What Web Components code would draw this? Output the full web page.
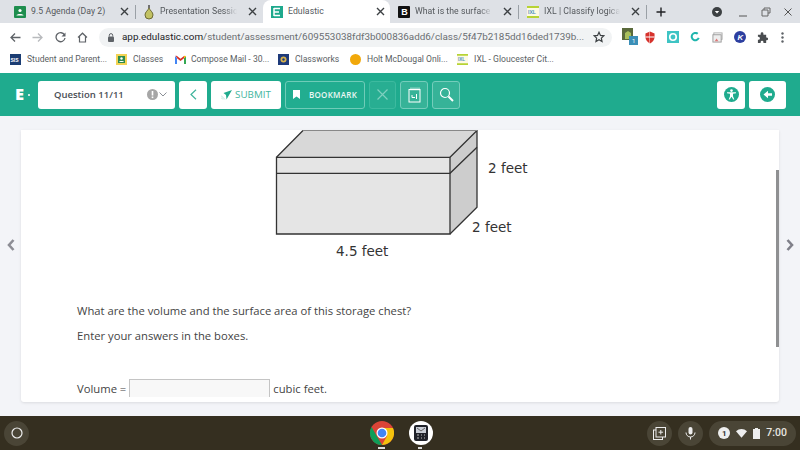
<!DOCTYPE html>
<html><head><meta charset="utf-8"><style>
html,body{margin:0;padding:0;width:800px;height:450px;overflow:hidden;background:#f3f4f8}
body{display:flex;flex-direction:column;font-family:"Open Sans","Noto Sans",sans-serif}
</style></head><body>
<browser-chrome></browser-chrome>
<edu-toolbar></edu-toolbar>
<test-stage></test-stage>
<os-shelf></os-shelf>
<script>
function def(name,html){customElements.define(name,class extends HTMLElement{constructor(){super();this.attachShadow({mode:'open'}).innerHTML=html(this)}})}
const x='<svg width="9" height="9" viewBox="0 0 9 9"><path d="M1 1l7 7M8 1L1 8" stroke="#3c4043" stroke-width="1.4"/></svg>';
const ixl='<rect width="12" height="12" fill="#fdf9e4"/><path d="M0 1h12M0 11h12" stroke="#b7d334" stroke-width="2"/><text x="1" y="8" font-size="5" font-weight="700" fill="#4a90c0" font-family="Liberation Sans">IXL</text>';
def('chrome-tab',h=>`<style>:host{display:flex;align-items:center;box-sizing:border-box;height:23px;flex:none;gap:5px;font:8.7px/1 "Roboto",sans-serif;letter-spacing:.05px;color:#54585c;white-space:nowrap}
.ic{display:flex;align-items:center;justify-content:center;flex:none}
.t{flex:1;min-width:0}
:host([fade]) .t{-webkit-mask-image:linear-gradient(90deg,#000 calc(100% - 18px),transparent calc(100% - 6px));mask-image:linear-gradient(90deg,#000 calc(100% - 18px),transparent calc(100% - 6px))}
:host([active]){background:#fff;border-radius:8px 8px 0 0}
.x{display:flex;flex:none}</style><span class="ic"><slot></slot></span><span class="t">${h.getAttribute('t')}</span><span class="x">${x}</span>`);
def('browser-chrome',()=>`<style>:host{display:block;flex:none}
.tabs{display:flex;height:23px;background:#dee1e6;align-items:center}
.sep{width:1px;height:14px;background:#9aa0a6;flex:none}
.omni{display:flex;align-items:center;height:26px;background:#fff;padding:2px 0 0 10px;box-sizing:border-box}
.omni>svg{flex:none}
.pill{display:flex;align-items:center;flex:none;height:19px;background:#f1f3f4;border-radius:10px;width:513px;box-sizing:border-box;padding:0 7px 0 9px;font:9.9px/1 "Roboto",sans-serif;color:#6a6e72;margin-left:11px}
.pill svg{flex:none}
.u{flex:1;min-width:0;white-space:nowrap;margin-left:8px}.u b{font-weight:400;color:#202124}
.bm{display:flex;align-items:center;height:24px;background:#fff;font:8.6px/1 "Roboto",sans-serif;color:#5a5e62;padding:0 0 3px 10px;box-sizing:border-box}
.bm span{display:flex;align-items:center;gap:6px;white-space:nowrap;flex:none}
.bm svg{flex:none}
</style>
<div class="tabs">
<chrome-tab t="9.5 Agenda (Day 2)" style="width:135px;padding:0 6px 0 14px"><svg width="12" height="12" viewBox="0 0 12 12"><rect width="12" height="12" fill="#1e8e4e" rx="1"/><circle cx="6" cy="4.5" r="1.6" fill="#fff"/><path d="M2.500 9.500c0-2 7-2 7 0z" fill="#fff"/></svg></chrome-tab>
<div class="sep"></div>
<chrome-tab fade t="Presentation Session" style="width:127px;padding:0 6px 0 7px"><svg width="12" height="16" viewBox="0 0 12 16"><path d="M6 4C5 6.500 2 8 2 11a4 4 0 0 0 8 0C10 8 7 6.500 6 4z" fill="#c2c263" stroke="#6d6a33"/><path d="M5.200 1h1.600v3H5.200z" fill="#555"/></svg></chrome-tab>
<chrome-tab active t="Edulastic" style="width:127px;padding:0 5px 0 8px"><svg width="12" height="12" viewBox="0 0 12 12"><rect width="12" height="12" fill="#1fa98d"/><path d="M3 2v8M3 2.500h6M3 6h5M3 9.500h6" stroke="#fff" stroke-width="1.500" fill="none"/></svg></chrome-tab>
<chrome-tab fade t="What is the surface ar" style="width:128px;padding:0 6px 0 8px"><svg width="12" height="12" viewBox="0 0 12 12"><rect width="12" height="12" fill="#111" rx="1"/><text x="3.200" y="9.400" font-size="9" font-weight="700" fill="#fff" font-family="Liberation Sans">B</text></svg></chrome-tab>
<div class="sep"></div>
<chrome-tab fade t="IXL | Classify logical f" style="width:127px;padding:0 6px 0 8px"><svg width="12" height="12" viewBox="0 0 12 12">${ixl}</svg></chrome-tab>
<div class="sep"></div>
<svg style="margin-left:9px;flex:none" width="10" height="10" viewBox="0 0 10 10"><path d="M5 .5v9M.5 5h9" stroke="#202124" stroke-width="1.400"/></svg>
<svg style="margin-left:auto;flex:none" width="10" height="10" viewBox="0 0 10 10"><circle cx="5" cy="5" r="5" fill="#3c4043"/><path d="M2.800 4h4.400L5 6.600z" fill="#fff"/></svg>
<svg style="margin-left:17px;flex:none" width="8" height="10" viewBox="0 0 8 10"><path d="M0 9h8" stroke="#555" stroke-width="1"/></svg>
<svg style="margin-left:14px;flex:none" width="10" height="10" viewBox="0 0 10 10"><path d="M3 3V1h6v5H7M1 3h6v6H1z" stroke="#666" fill="none"/></svg>
<svg style="margin:0 8px 0 13px;flex:none" width="8" height="8" viewBox="0 0 8 8"><path d="M.5.500l7 7M7.500.500l-7 7" stroke="#555" stroke-width="1"/></svg>
</div>
<div class="omni">
<svg width="11" height="11" viewBox="0 0 11 11"><path d="M10.500 5.500H1M5 1.500l-4 4 4 4" stroke="#5f6368" stroke-width="1.300" fill="none"/></svg>
<svg style="margin-left:11px" width="11" height="11" viewBox="0 0 11 11"><path d="M.5 5.500H10M6 1.500l4 4-4 4" stroke="#b8babd" stroke-width="1.300" fill="none"/></svg>
<svg style="margin-left:12px" width="11" height="11" viewBox="0 0 11 11"><path d="M9.500 3A4.500 4.500 0 1 0 10 6" stroke="#5f6368" stroke-width="1.300" fill="none"/><path d="M10.500 .5v4h-4z" fill="#5f6368"/></svg>
<svg style="margin-left:11px" width="11" height="11" viewBox="0 0 11 11"><path d="M1 5.500 5.500 1.200 10 5.500M2.500 4.500v5.500h6V4.500" stroke="#5f6368" stroke-width="1.200" fill="none"/></svg>
<div class="pill"><svg width="6" height="9" viewBox="0 0 6 9"><rect y="3.500" width="6" height="5.500" rx="1" fill="#5f6368"/><path d="M1.300 3.500V2.300a1.700 1.700 0 0 1 3.400 0V3.500" stroke="#5f6368" fill="none"/></svg><span class="u"><b>app.edulastic.com</b>/student/assessment/609553038fdf3b000836add6/class/5f47b2185dd16ded1739b...</span><svg width="12" height="12" viewBox="0 0 24 24"><path d="M12 2.500l2.900 6.300 6.900.8-5.100 4.700 1.400 6.800-6.100-3.500-6.100 3.500 1.400-6.800-5.100-4.700 6.900-.8z" fill="none" stroke="#3c4043" stroke-width="2.400"/></svg></div>
<svg style="margin-left:10px" width="16" height="18" viewBox="0 0 16 18"><rect x="0" y="0" width="11" height="12" fill="#5a6a3c"/><path d="M3 11V5l3-2 3 2v6z" fill="#a9c05c"/><rect x="7" y="8" width="9" height="9" fill="#3b8fb8"/><text x="10" y="15" font-size="6" fill="#fff" font-family="Roboto">1</text></svg>
<svg style="margin-left:7px" width="10" height="13" viewBox="0 0 11 13"><path d="M5.500 0l5 2v4c0 3-2 5.500-5 7-3-1.500-5-4-5-7V2z" fill="#d6322c"/><path d="M5.500 0v5.500h5v1h-5V13H5V6.500H.5v-1H5V0z" fill="#fff"/></svg>
<svg style="margin-left:12px" width="12" height="12" viewBox="0 0 13 13"><rect width="13" height="13" fill="#3fc4c4"/><circle cx="6.500" cy="6.500" r="3.500" fill="none" stroke="#fff" stroke-width="1.800"/></svg>
<svg style="margin-left:11px" width="10" height="10" viewBox="0 0 11 11"><path d="M8.500 2A4 4 0 1 0 9.600 6.500" fill="none" stroke="#1fb5ad" stroke-width="2.200"/></svg>
<svg style="margin-left:12px" width="11" height="11" viewBox="0 0 12 12"><rect x="2" y="1" width="9" height="7" fill="#fff" stroke="#aaa"/><rect x="1" y="3" width="9" height="8" fill="#eee" stroke="#999"/><path d="M3 10l2-3 2 3z" fill="#d77"/></svg>
<svg style="margin-left:11px" width="12" height="12" viewBox="0 0 13 13"><circle cx="6.500" cy="6.500" r="6.500" fill="#2d3fa0"/><text x="3.800" y="9.500" font-size="8.500" font-style="italic" font-weight="700" fill="#fff" font-family="Liberation Sans">K</text></svg>
<svg style="margin-left:11px" width="11" height="11" viewBox="0 0 12 12"><path d="M1 3h3V1.800a1.500 1.500 0 0 1 3 0V3h3v3h.6a1.500 1.500 0 0 1 0 3H10v3H7v-1a1.500 1.500 0 0 0-3 0v1H1V8.500h.5a1.700 1.700 0 0 0 0-3.400H1z" fill="#4a4d50"/></svg>
<svg style="margin-left:13px" width="3" height="11" viewBox="0 0 3 11"><circle cx="1.500" cy="1.500" r="1.200" fill="#5f6368"/><circle cx="1.500" cy="5.500" r="1.200" fill="#5f6368"/><circle cx="1.500" cy="9.500" r="1.200" fill="#5f6368"/></svg>
</div>
<div class="bm">
<span style="width:106px"><svg width="11" height="11" viewBox="0 0 11 11"><rect width="11" height="11" fill="#1b3d73"/><text x=".5" y="7.500" font-size="5" font-weight="700" fill="#fff" font-family="Liberation Sans">SIS</text></svg>Student and Parent...</span>
<span style="width:59px"><svg width="11" height="11" viewBox="0 0 11 11"><rect width="11" height="11" fill="#f2d354"/><rect x="2" y="2" width="7" height="7" fill="#2e8b4e"/><circle cx="5.500" cy="4.500" r="1.200" fill="#fff"/><path d="M3 8c0-1.500 5-1.500 5 0z" fill="#fff"/></svg>Classes</span>
<span style="width:103px;gap:5px"><svg width="11" height="9" viewBox="0 0 11 9"><path d="M0 1V9h11V1L9 .5 5.500 3.200 2 .5z" fill="#fff"/><path d="M2 3.200 5.500 6 9 3.200V1L5.500 3.700 2 1 .5 .6z" fill="#d93025"/><path d="M0 1V9h2V3z" fill="#4285f4"/><path d="M9 3v6h2V1.500z" fill="#34a853"/><path d="M9 .8v2.400l2-1.600V1z" fill="#fbbc04"/></svg>Compose Mail - 30...</span>
<span style="width:72px"><svg width="11" height="11" viewBox="0 0 11 11"><rect width="11" height="11" fill="#1e3a7a"/><circle cx="5.500" cy="5.500" r="3" fill="#d8b24c"/><circle cx="5.500" cy="5.500" r="1.200" fill="#1e3a7a"/></svg>Classworks</span>
<span style="width:107px"><svg width="11" height="11" viewBox="0 0 11 11"><circle cx="5.500" cy="5.500" r="5.500" fill="#f1a80a"/></svg>Holt McDougal Onli...</span>
<span><svg width="11" height="11" viewBox="0 0 12 12">${ixl}</svg>IXL - Gloucester Cit...</span>
</div>`);
def('edu-btn',h=>`<style>:host{display:flex;align-items:center;justify-content:center;box-sizing:border-box;height:28px;border-radius:3px;flex:none;background:#fff;color:#44b6a0;gap:3px;font:400 9.800px/1 "Open Sans",sans-serif;margin-left:4px}
:host([ghost]){background:#36b398;border:1px solid #74cdbb;color:#eaf7f4}
:host([line]){background:#22ad90;border:1px solid #6fccb8;color:#eaf7f4}
:host([dim]){background:#28ae92;border:1px solid #3dba9f}</style><slot></slot>`);
def('edu-toolbar',()=>`<style>:host{display:flex;align-items:center;flex:none;height:43px;background:#1fab8e;box-sizing:border-box;padding:0 14px 0 15px}
.logo{color:#fff;font:800 16.500px/1 "Open Sans",sans-serif;width:23px;flex:none;display:flex;align-items:center;gap:4px}
.logo i{width:2px;height:2px;border-radius:50%;background:#fff}
.q{font:600 9.500px/1 "Open Sans",sans-serif;color:#4a4e55;margin-left:16px;flex:1;white-space:nowrap}
</style><span class="logo">E<i></i></span>
<edu-btn style="width:137px;margin-left:0;justify-content:flex-start;gap:0;padding-right:8px"><span class="q">Question 11/11</span><svg width="11" height="11" viewBox="0 0 11 11"><circle cx="5.500" cy="5.500" r="5.500" fill="#a6a6a6"/><rect x="4.700" y="2" width="1.600" height="4.500" fill="#fff"/><rect x="4.700" y="7.500" width="1.600" height="1.600" fill="#fff"/></svg><svg style="margin-left:1px" width="8" height="5" viewBox="0 0 8 5"><path d="M.5.500l3.500 3.500 3.500-3.500" fill="none" stroke="#8a8f96"/></svg></edu-btn>
<edu-btn style="width:28px"><svg width="7" height="11" viewBox="0 0 7 11"><path d="M6 .7 1 5.500l5 4.800" fill="none" stroke="#3fb49c" stroke-width="1.200"/></svg></edu-btn>
<edu-btn style="width:70px"><svg width="11" height="10" viewBox="0 0 11 10"><path d="M11 0 2.500 3 5 5l.500 4.500z" fill="#1fab8e"/><path d="M0 7.500l2 2M0 5.500l4 4" stroke="#a5dcd0" stroke-width=".8"/></svg>SUBMIT</edu-btn>
<edu-btn line style="width:80px;font-size:8px;font-weight:600;gap:9px;letter-spacing:.3px"><svg width="7" height="9" viewBox="0 0 7 9"><path d="M0 0h7v9L3.500 6.500 0 9z" fill="#fff"/></svg>BOOKMARK</edu-btn>
<edu-btn dim style="width:27px"><svg width="11" height="11" viewBox="0 0 11 11"><path d="M.5.500l10 10M10.500.500l-10 10" stroke="#7fd0bf" stroke-width="1.200"/></svg></edu-btn>
<edu-btn ghost style="width:28px"><svg width="13" height="16" viewBox="0 0 13 16"><rect x="1" y="2.500" width="11" height="12.500" fill="none" stroke="#fff" stroke-width="1"/><path d="M3 .5v3M5 .5v3M7 .5v3M9 .5v3M11 .5v3" stroke="#fff" stroke-width=".8"/><path d="M4 8v2.500h3M8.500 7v5" stroke="#fff" fill="none"/></svg></edu-btn>
<edu-btn ghost style="width:28px"><svg width="15" height="15" viewBox="0 0 15 15"><circle cx="6" cy="6" r="4.500" fill="none" stroke="#fff" stroke-width="1.200"/><path d="M9.500 9.500l4.500 4.500" stroke="#fff" stroke-width="2"/></svg></edu-btn>
<edu-btn style="width:28px;margin-left:auto"><svg width="15" height="15" viewBox="0 0 15 15"><circle cx="7.500" cy="7.500" r="7.500" fill="#1fab8e"/><circle cx="7.500" cy="3.600" r="1.300" fill="#fff"/><path d="M3 5.300h9v1l-3 .5v2.500L10.300 12.500h-1L7.500 9.800 5.700 12.500h-1L6 9.300V6.800L3 6.300z" fill="#fff"/></svg></edu-btn>
<edu-btn style="width:37px"><svg width="15" height="15" viewBox="0 0 15 15"><circle cx="7.500" cy="7.500" r="7.500" fill="#1fab8e"/><path d="M12 6.300H8V3.800L3.500 7.500 8 11.200V8.700h4z" fill="#fff"/></svg></edu-btn>`);
def('test-stage',()=>`<style>:host{display:flex;flex:1;min-height:0;position:relative;background:#f3f4f8;padding:14px 21px 0 21px;overflow:hidden;box-sizing:border-box;align-items:flex-start}
.edge{position:absolute;top:123px;width:8px;height:12px}
.bar{position:absolute;left:776px;top:54px;width:3px;height:177px;background:#8f9092}
</style><question-card style="flex:1"></question-card>
<svg class="edge" style="left:7px" viewBox="0 0 8 12"><path d="M6.500 1 2 6l4.500 5" fill="none" stroke="#8d8d95" stroke-width="2.600"/></svg>
<svg class="edge" style="left:786px" viewBox="0 0 8 12"><path d="M1.500 1 6 6l-4.500 5" fill="none" stroke="#80808a" stroke-width="2.600"/></svg>
<div class="bar"></div>`);
def('question-card',()=>`<style>:host{display:block;background:#fff;height:272px;border-radius:0 0 3px 3px;box-shadow:0 1px 3px #0000001a;font:11.250px/1 "Open Sans",sans-serif;color:#444;box-sizing:border-box;padding-bottom:5px}
.scroll{height:100%;overflow:hidden}
.fig{display:block;margin:0 0 0 250px}
p{margin:0;padding-left:56px;white-space:nowrap}
.f{display:flex;align-items:flex-start;padding-left:56px;gap:3px}
.inp{width:139px;height:20px;border:1px solid #c4c4c4;border-bottom:0;background:#f8f8f8;margin-top:-4px;flex:none}
</style><div class="scroll">
<svg class="fig" width="300" height="134" viewBox="0 0 300 134">
<path d="M5.500 27.300H179V104H5.500z" fill="#e5e5e5"/>
<path d="M5.500 27.300 32 .5H206L179 27.300z" fill="#d8d8d8"/>
<path d="M179 27.300 206 .5V77.300L179 104z" fill="#cdcdcd"/>
<g fill="none" stroke="#333" stroke-width="1.300"><path d="M5.500 27.300H179V104H5.500z"/><path d="M5.500 27.300 32 .5M179 27.300 206 .5V77.300L179 104"/><path d="M5.500 43.300H179L206 17.300"/></g>
<path d="M32 .5H206" stroke="#888"/>
<g font-family="DejaVu Sans" font-size="13.500" fill="#333"><text x="217" y="42.500">2 feet</text><text x="201" y="101.500">2 feet</text><text x="65" y="125.500">4.5 feet</text></g>
</svg>
<p style="margin-top:41px">What are the volume and the surface area of this storage chest?</p>
<p style="margin-top:14px">Enter your answers in the boxes.</p>
<div class="f" style="margin-top:41px"><span>Volume =</span><span class="inp"></span><span>cubic feet.</span></div>
</div>`);
def('os-shelf',()=>`<style>:host{display:flex;align-items:center;flex:none;height:34px;background:#352f20;position:relative;padding:0 4px;box-sizing:border-box}
.c{display:flex;align-items:center;justify-content:center;width:25px;height:25px;border-radius:50%;background:#4a4536;flex:none}
.chrome{position:absolute;left:369.500px;top:5px}
.dot{position:absolute;left:378px;top:31px;width:7px;height:2px;background:#ddd}
.dot2{position:absolute;left:418px;top:31px;width:4px;height:2px;background:#ddd}
.save{position:absolute;left:409px;top:5px}
.tray{display:flex;align-items:center;height:25px;background:#4a4536;border-radius:13px;padding:0 9px;gap:6px;font:500 10.500px/1 "Roboto",sans-serif;color:#e8e6e0;flex:none}
</style><span class="c"><svg width="12" height="12" viewBox="0 0 12 12"><circle cx="6" cy="6" r="5" fill="none" stroke="#eee" stroke-width="1.200"/></svg></span>
<svg class="chrome" width="24" height="24" viewBox="0 0 24 24"><circle cx="12" cy="12" r="12" fill="#db4437"/><path d="M12 24A12 12 0 0 1 1.600 6L7 15.500z" fill="#0f9d58"/><path d="M12 24A12 12 0 0 0 23 7H12l5 8z" fill="#f4c20d"/><circle cx="12" cy="12" r="5.500" fill="#fff"/><circle cx="12" cy="12" r="4.300" fill="#4285f4"/></svg>
<span class="dot"></span>
<svg class="save" width="24" height="24" viewBox="0 0 24 24"><circle cx="12" cy="12" r="12" fill="#fff"/><rect x="5" y="4" width="14" height="16" rx="2" fill="#20222a"/><rect x="7" y="6" width="10" height="6" fill="#c9cdd6"/><path d="M8 7l4 3 4-3" stroke="#666" fill="none"/><path d="M8 14h2M8 17h2M12 14h1M12 17h1M15 14h1M15 17h1" stroke="#bbb"/></svg>
<span class="dot2"></span>
<span class="c" style="margin-left:auto"><svg width="13" height="13" viewBox="0 0 13 13"><rect x=".5" y="3" width="9" height="9.500" fill="none" stroke="#eee"/><rect x="3" y=".5" width="9.500" height="9.500" fill="#4a4536" stroke="#eee"/><path d="M7.800 3v4.500M5.500 5.200h4.600" stroke="#eee"/></svg></span>
<span class="c" style="margin-left:6px"><svg width="11" height="14" viewBox="0 0 11 14"><rect x="3.500" y="1" width="4" height="7.500" rx="2" fill="#eee"/><path d="M1 6.500a4.500 4.500 0 0 0 9 0M5.500 11v2.500" fill="none" stroke="#eee"/></svg></span>
<span class="tray" style="margin-left:6px"><svg width="12" height="12" viewBox="0 0 12 12"><circle cx="6" cy="6" r="6" fill="#eee"/><text x="4" y="9" font-size="8" font-weight="700" fill="#333" font-family="Roboto">1</text></svg><svg width="11" height="9" viewBox="0 0 12 9"><path d="M0 2a9 9 0 0 1 12 0L6 9z" fill="#eee"/></svg><svg width="7" height="11" viewBox="0 0 7 11"><path d="M2 0h3v1h2v10H0V1h2z" fill="#eee"/></svg><span>7:00</span></span>`);
</script>
</body></html>
